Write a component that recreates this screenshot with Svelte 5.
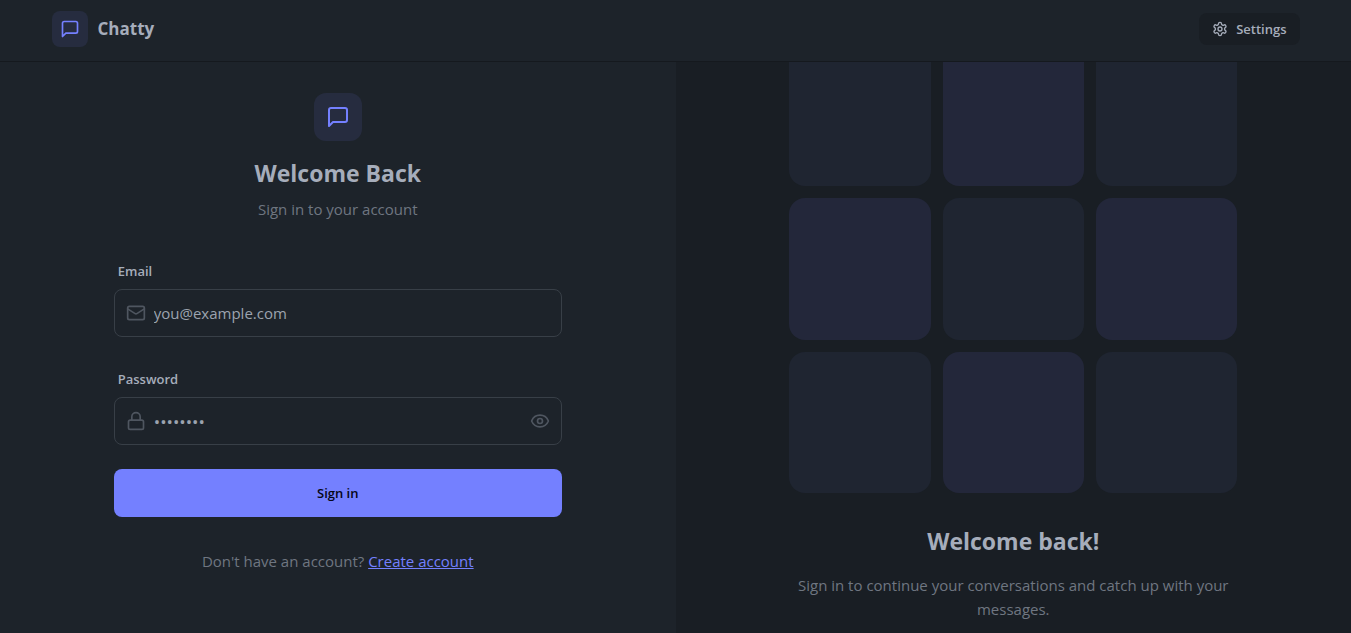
<script>
  let email = $state('');
  let password = $state('');
  let showPassword = $state(false);

  const tiles = Array.from({ length: 9 }, (_, i) => i);

  function submit(event) {
    event.preventDefault();
  }
</script>

{#snippet messageIcon(size)}
  <svg class="icon" width={size} height={size} viewBox="0 0 24 24" aria-hidden="true">
    <path d="M21 15a2 2 0 0 1-2 2H7l-4 4V5a2 2 0 0 1 2-2h14a2 2 0 0 1 2 2z" />
  </svg>
{/snippet}

<header class="topbar">
  <div class="topbar-inner">
    <a class="brand" href="#home">
      <span class="brand-mark">{@render messageIcon(20)}</span>
      <span class="brand-name">Chatty</span>
    </a>
    <a class="settings" href="#settings">
      <svg class="icon" width="16" height="16" viewBox="0 0 24 24" aria-hidden="true">
        <path d="M12.22 2h-.44a2 2 0 0 0-2 2v.18a2 2 0 0 1-1 1.73l-.43.25a2 2 0 0 1-2 0l-.15-.08a2 2 0 0 0-2.73.73l-.22.38a2 2 0 0 0 .73 2.73l.15.1a2 2 0 0 1 1 1.72v.51a2 2 0 0 1-1 1.74l-.15.09a2 2 0 0 0-.73 2.73l.22.38a2 2 0 0 0 2.73.73l.15-.08a2 2 0 0 1 2 0l.43.25a2 2 0 0 1 1 1.73V20a2 2 0 0 0 2 2h.44a2 2 0 0 0 2-2v-.18a2 2 0 0 1 1-1.73l.43-.25a2 2 0 0 1 2 0l.15.08a2 2 0 0 0 2.73-.73l.22-.39a2 2 0 0 0-.73-2.73l-.15-.08a2 2 0 0 1-1-1.74v-.5a2 2 0 0 1 1-1.74l.15-.09a2 2 0 0 0 .73-2.73l-.22-.38a2 2 0 0 0-2.73-.73l-.15.08a2 2 0 0 1-2 0l-.43-.25a2 2 0 0 1-1-1.73V4a2 2 0 0 0-2-2z" />
        <circle cx="12" cy="12" r="3" />
      </svg>
      <span>Settings</span>
    </a>
  </div>
</header>

<main class="page">
  <section class="column">
    <div class="content">
      <div class="intro">
        <div class="intro-mark">{@render messageIcon(24)}</div>
        <h1>Welcome Back</h1>
        <p>Sign in to your account</p>
      </div>

      <form onsubmit={submit}>
        <div class="field">
          <label for="email">Email</label>
          <div class="control">
            <svg class="icon" width="20" height="20" viewBox="0 0 24 24" aria-hidden="true">
              <rect width="20" height="16" x="2" y="4" rx="2" />
              <path d="m22 7-8.97 5.7a1.94 1.94 0 0 1-2.06 0L2 7" />
            </svg>
            <input id="email" type="email" placeholder="you@example.com" bind:value={email} />
          </div>
        </div>

        <div class="field">
          <label for="password">Password</label>
          <div class="control">
            <svg class="icon" width="20" height="20" viewBox="0 0 24 24" aria-hidden="true">
              <rect width="18" height="11" x="3" y="11" rx="2" />
              <path d="M7 11V7a5 5 0 0 1 10 0v4" />
            </svg>
            <input
              id="password"
              class="secret"
              type={showPassword ? 'text' : 'password'}
              placeholder="••••••••"
              bind:value={password}
            />
            <button
              class="reveal"
              type="button"
              aria-label="Show password"
              aria-pressed={showPassword}
              onclick={() => (showPassword = !showPassword)}
            >
              <svg class="icon" width="20" height="20" viewBox="0 0 24 24" aria-hidden="true">
                <path d="M2.062 12.348a1 1 0 0 1 0-.696 10.75 10.75 0 0 1 19.876 0 1 1 0 0 1 0 .696 10.75 10.75 0 0 1-19.876 0" />
                <circle cx="12" cy="12" r="3" />
              </svg>
            </button>
          </div>
        </div>

        <button class="submit" type="submit">Sign in</button>
      </form>

      <p class="signup">Don't have an account? <a href="#signup">Create account</a></p>
    </div>
  </section>

  <section class="column pattern">
    <div class="content">
      <div class="tiles">
        {#each tiles as tile (tile)}
          <div class="tile" class:dim={tile % 2 === 0}></div>
        {/each}
      </div>
      <h2>Welcome back!</h2>
      <p>Sign in to continue your conversations and catch up with your messages.</p>
    </div>
  </section>
</main>

<style>
  :global(body) {
    background: #1d232a;
    color: #a6adbb;
    font-family: 'Segoe UI', 'Open Sans', 'Noto Sans', sans-serif;
    font-size: 15px;
    line-height: 24px;
  }

  :global(*) {
    box-sizing: border-box;
  }

  h1,
  h2,
  p {
    margin: 0;
  }

  h1,
  h2 {
    font-size: 23px;
    line-height: 32px;
    font-weight: 700;
  }

  p {
    color: #6f7681;
  }

  .icon {
    display: block;
    flex: none;
    fill: none;
    stroke: currentColor;
    stroke-width: 2;
    stroke-linecap: round;
    stroke-linejoin: round;
  }

  .topbar {
    position: fixed;
    inset: 0 0 auto;
    z-index: 2;
    background: #1d232a;
    border-bottom: 1px solid #15191e;
  }

  .topbar-inner {
    display: flex;
    align-items: center;
    justify-content: space-between;
    max-width: 1280px;
    margin: 0 auto;
    padding: 11px 16px 14px;
  }

  .brand {
    display: flex;
    align-items: center;
    gap: 10px;
    color: inherit;
    text-decoration: none;
  }

  .brand-mark,
  .intro-mark {
    display: flex;
    align-items: center;
    justify-content: center;
    background: #262c3f;
    color: #7480ff;
  }

  .brand-mark {
    width: 36px;
    height: 36px;
    border-radius: 8px;
  }

  .brand-name {
    font-size: 17px;
    font-weight: 700;
  }

  .settings {
    display: flex;
    align-items: center;
    gap: 8px;
    height: 32px;
    padding: 0 13px;
    border-radius: 8px;
    background: #191e24;
    color: inherit;
    font-size: 13px;
    font-weight: 600;
    text-decoration: none;
  }

  .page {
    display: grid;
    grid-template-columns: 1fr 1fr;
    min-height: 100vh;
  }

  .column {
    display: flex;
    align-items: center;
    justify-content: center;
    padding: 45px 48px 12px;
  }

  .pattern {
    background: #191e24;
    text-align: center;
  }

  .content {
    width: 100%;
    max-width: 448px;
  }

  .intro {
    display: flex;
    flex-direction: column;
    align-items: center;
    gap: 8px;
    margin-bottom: 32px;
  }

  .intro-mark {
    width: 48px;
    height: 48px;
    margin-bottom: 8px;
    border-radius: 12px;
  }

  form {
    display: flex;
    flex-direction: column;
    gap: 24px;
    margin-bottom: 32px;
  }

  label {
    display: block;
    padding: 8px 4px;
    font-size: 13px;
    line-height: 20px;
    font-weight: 600;
  }

  .control {
    display: flex;
    align-items: center;
    gap: 8px;
    height: 48px;
    padding: 0 11px;
    border: 1px solid #383f47;
    border-radius: 8px;
    color: #4f5660;
  }

  .control:focus-within {
    border-color: #7480ff;
  }

  input {
    flex: 1;
    min-width: 0;
    height: 100%;
    padding: 0;
    border: 0;
    outline: 0;
    background: transparent;
    color: #a6adbb;
    font: inherit;
  }

  input::placeholder {
    color: #9ca3af;
    opacity: 1;
  }

  .secret {
    font-size: 17px;
  }

  .reveal {
    padding: 0;
    border: 0;
    background: transparent;
    color: inherit;
    cursor: pointer;
  }

  .submit {
    height: 48px;
    border: 0;
    border-radius: 8px;
    background: #7480ff;
    color: #050617;
    font: inherit;
    font-size: 13px;
    font-weight: 600;
    cursor: pointer;
  }

  .signup {
    text-align: center;
  }

  .signup a {
    color: #7480ff;
  }

  .tiles {
    display: grid;
    grid-template-columns: repeat(3, 1fr);
    gap: 12px;
    margin-bottom: 32px;
  }

  .tile {
    aspect-ratio: 1;
    border-radius: 16px;
    background: #23273a;
  }

  .tile.dim {
    background: #1f2531;
  }

  h2 {
    margin-bottom: 16px;
  }
</style>
